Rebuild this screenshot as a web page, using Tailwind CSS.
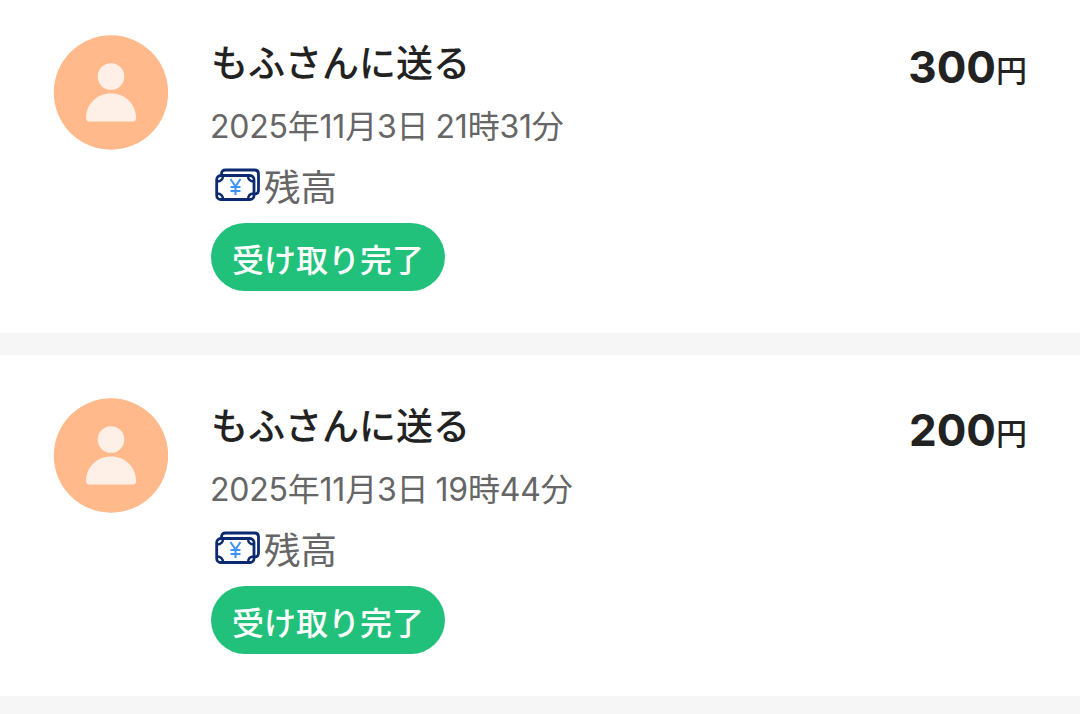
<!DOCTYPE html>
<html lang="ja">
<head>
    <meta charset="UTF-8">
    <meta name="viewport" content="width=device-width, initial-scale=1.0">
    <title>取引履歴</title>
    <script src="https://cdn.jsdelivr.net/npm/@tailwindcss/browser@4"></script>
</head>
<body class="h-[714px] overflow-hidden bg-[#f6f6f6] font-['Inter','Noto_Sans_CJK_JP',sans-serif]">
    <main id="history" class="-mt-2 flex flex-col gap-[22px]"></main>

    <script>
        const transactions = [
            { title: 'もふさんに送る', date: '2025年11月3日 21時31分', amount: '300' },
            { title: 'もふさんに送る', date: '2025年11月3日 19時44分', amount: '200' }
        ];

        document.getElementById('history').innerHTML = transactions.map(item => `
            <article class="flex h-[341px] items-start bg-white pt-[43px] pr-[53px] pl-[53px]">
                <!-- Avatar -->
                <svg class="size-[115px] shrink-0" viewBox="0 0 115 115">
                    <circle cx="58" cy="57.500" r="57.200" fill="#ffb98a"/>
                    <circle cx="58" cy="41.500" r="13.300" fill="#fff0e7"/>
                    <path d="M33 83c0-14 11-24.500 25-24.500s25 10.500 25 24.500c0 2-1 3.500-3 3.500H36c-2 0-3-1.500-3-3.500z" fill="#fff0e7"/>
                </svg>

                <!-- Details -->
                <div class="ml-[43px] flex flex-col items-start whitespace-nowrap">
                    <h2 class="h-[66px] pt-px text-[37px] leading-[56px] font-medium text-[#222]">${item.title}</h2>
                    <p class="-ml-px h-[62px] pt-0.5 text-[32px] leading-[48px] tracking-[-0.22px] [word-spacing:-1.5px] text-[#666]">${item.date}</p>
                    <div class="flex h-[60px] items-start gap-1 text-[36.500px] leading-[50px] text-[#666]">
                        <svg class="mt-[5px] ml-1 h-[33px] w-[45px]" viewBox="0 0 45 33" fill="none" stroke="#0b2a70" stroke-width="2.800">
                            <path d="M6.500 7V6q0-4 4-4h29q4 0 4 4v16q0 4-4 4"/>
                            <rect x="1.700" y="7.500" width="37.300" height="24" rx="4"/>
                            <path d="M8 7.500q0 6-6 6M33 7.500q0 6 6 6M2 25.500q6 0 6 6M39 25.500q-6 0-6 6" stroke-width="2.400"/>
                            <path d="M15.500 11l5 7.500l5-7.500M20.500 18v9M15.500 19h10M15.500 23h10" stroke="#3d92f5" stroke-width="2"/>
                        </svg>
                        <span>残高</span>
                    </div>
                    <span class="flex h-[68px] w-[234px] items-center justify-center rounded-full bg-[#22c17b] pt-2 text-[32px] font-medium text-white">受け取り完了</span>
                </div>

                <!-- Amount -->
                <p class="ml-auto flex items-baseline leading-[64px] text-[#222]"><span class="text-[44px] font-bold">${item.amount}</span><span class="relative -top-px text-[31px] leading-[56px] font-medium">円</span></p>
            </article>
        `).join('');
    </script>
</body>
</html>
